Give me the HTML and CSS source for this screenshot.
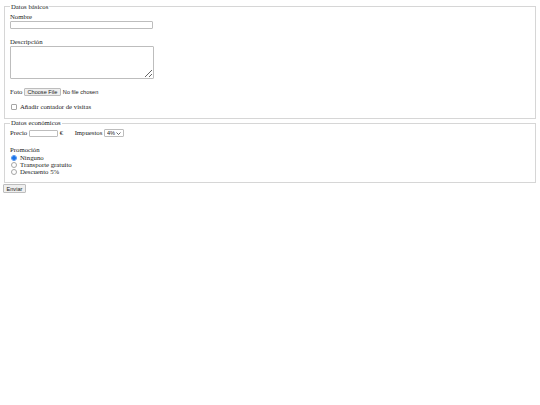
FILE: index.html
```html
<!DOCTYPE html>
<html lang="es">
<head>
    <meta charset="UTF-8">
    <title>Formulario de producto</title>
    <link rel="stylesheet" href="styles.css">
</head>
<body>
    <form class="form-producto" action="#" method="post">
        <fieldset class="bloque bloque-basico">
            <legend>Datos básicos</legend>
            <label class="etiqueta" for="nombre">Nombre</label>
            <input type="text" id="nombre" name="nombre" class="campo campo-nombre">

            <label class="etiqueta etiqueta-desc" for="descripcion">Descripción</label>
            <textarea id="descripcion" name="descripcion" class="campo campo-descripcion"></textarea>

            <div class="fila fila-foto">
                <label for="foto">Foto</label>
                <input type="file" id="foto" name="foto" class="campo-foto">
            </div>

            <div class="fila fila-check">
                <input type="checkbox" id="contador" name="contador" class="casilla">
                <label for="contador">Añadir contador de visitas</label>
            </div>
        </fieldset>

        <fieldset class="bloque bloque-economico">
            <legend>Datos económicos</legend>
            <div class="fila fila-precio">
                <label for="precio">Precio</label>
                <input type="text" id="precio" name="precio" class="campo campo-precio">
                <span class="moneda">€</span>
                <label for="impuestos">Impuestos</label>
                <span class="selector">
                    <select id="impuestos" name="impuestos">
                        <option>4%</option>
                        <option>10%</option>
                        <option>21%</option>
                    </select>
                    <svg class="flecha" viewBox="0 0 10 6" width="5" height="3">
                        <path d="M1 1 L5 5 L9 1" fill="none" stroke="#444" stroke-width="1.6"/>
                    </svg>
                </span>
            </div>

            <div class="etiqueta etiqueta-promo">Promoción</div>
            <div class="fila fila-radio">
                <input type="radio" id="p0" name="promocion" class="opcion" checked>
                <label for="p0">Ninguno</label>
            </div>
            <div class="fila fila-radio">
                <input type="radio" id="p1" name="promocion" class="opcion">
                <label for="p1">Transporte gratuito</label>
            </div>
            <div class="fila fila-radio">
                <input type="radio" id="p2" name="promocion" class="opcion">
                <label for="p2">Descuento 5%</label>
            </div>
        </fieldset>

        <button type="submit" class="btn-enviar">Enviar</button>
    </form>
</body>
</html>
```
FILE: styles.css
```css
body {
    margin: 3px;
    font-family: "Liberation Serif", "Times New Roman", serif;
    font-size: 6.75px;
    line-height: 7.75px;
    color: #222;
    background: #fff;
}

.bloque {
    margin: 0 1px;
    padding: 2.25px 5px 7px;
    border: 1px solid #d6d6d6;
}

.bloque-economico {
    margin-top: 0.5px;
    padding-bottom: 6.5px;
}

.bloque legend {
    padding: 0 1px;
}

.etiqueta {
    display: block;
}

.etiqueta-desc {
    margin-top: 9px;
}

.etiqueta-promo {
    margin-top: 9px;
}

.campo {
    display: block;
    box-sizing: border-box;
    margin: 0;
    padding: 0 1px;
    border: 1px solid #bdbdbd;
    border-radius: 1px;
    font-family: "Liberation Sans", Arial, sans-serif;
    font-size: 5.6px;
    background: #fff;
}

.campo-nombre {
    width: 143px;
    height: 8px;
}

.campo-descripcion {
    width: 144px;
    height: 33.5px;
    margin-top: 0.25px;
    resize: vertical;
}

.fila {
    display: flex;
    align-items: center;
}

.fila-foto {
    margin-top: 8.5px;
    height: 8px;
}

.campo-foto {
    margin-left: 1.6px;
    font-family: "Liberation Sans", Arial, sans-serif;
    font-size: 5.6px;
    color: #222;
}

.campo-foto::file-selector-button {
    height: 8px;
    margin-right: 2px;
    padding: 0 2.5px;
    border: 1px solid #bdbdbd;
    border-radius: 1px;
    background: #efefef;
    font-family: "Liberation Sans", Arial, sans-serif;
    font-size: 5.6px;
    color: #222;
}

.fila-check {
    margin-top: 7px;
    height: 8px;
}

.casilla {
    appearance: none;
    box-sizing: border-box;
    width: 5.5px;
    height: 5.5px;
    margin: 0 3.5px 0 1px;
    border: 1px solid #a6a6a6;
    border-radius: 1px;
    background: #fff;
}

.fila-precio {
    height: 8px;
}

.campo-precio {
    width: 29px;
    height: 7px;
    margin: 0 1.5px 0 2px;
}

.moneda {
    margin-right: 11.5px;
}

.selector {
    position: relative;
    display: inline-block;
    margin-left: 2px;
}

.selector select {
    appearance: none;
    box-sizing: border-box;
    width: 20px;
    height: 8px;
    margin: 0;
    padding: 0 0 0 1.5px;
    border: 1px solid #bdbdbd;
    border-radius: 1px;
    background: #fff;
    font-family: "Liberation Sans", Arial, sans-serif;
    font-size: 5.6px;
    color: #222;
}

.flecha {
    position: absolute;
    right: 3px;
    top: 2.5px;
    pointer-events: none;
}

.fila-radio {
    height: 7px;
    line-height: 7px;
}

.opcion {
    appearance: none;
    box-sizing: border-box;
    width: 6px;
    height: 6px;
    margin: 0 3px 0 1px;
    border: 1px solid #a6a6a6;
    border-radius: 50%;
    background: #fff;
}

.opcion:checked {
    border-color: #4a8ff0;
    background: radial-gradient(circle, #1a73e8 0 55%, #9fc3f5 70%);
}

.btn-enviar {
    box-sizing: border-box;
    height: 9px;
    margin-top: 1.5px;
    padding: 0 2.5px;
    border: 1px solid #bdbdbd;
    border-radius: 1px;
    background: #efefef;
    font-family: "Liberation Sans", Arial, sans-serif;
    font-size: 5.6px;
    color: #222;
}
```
